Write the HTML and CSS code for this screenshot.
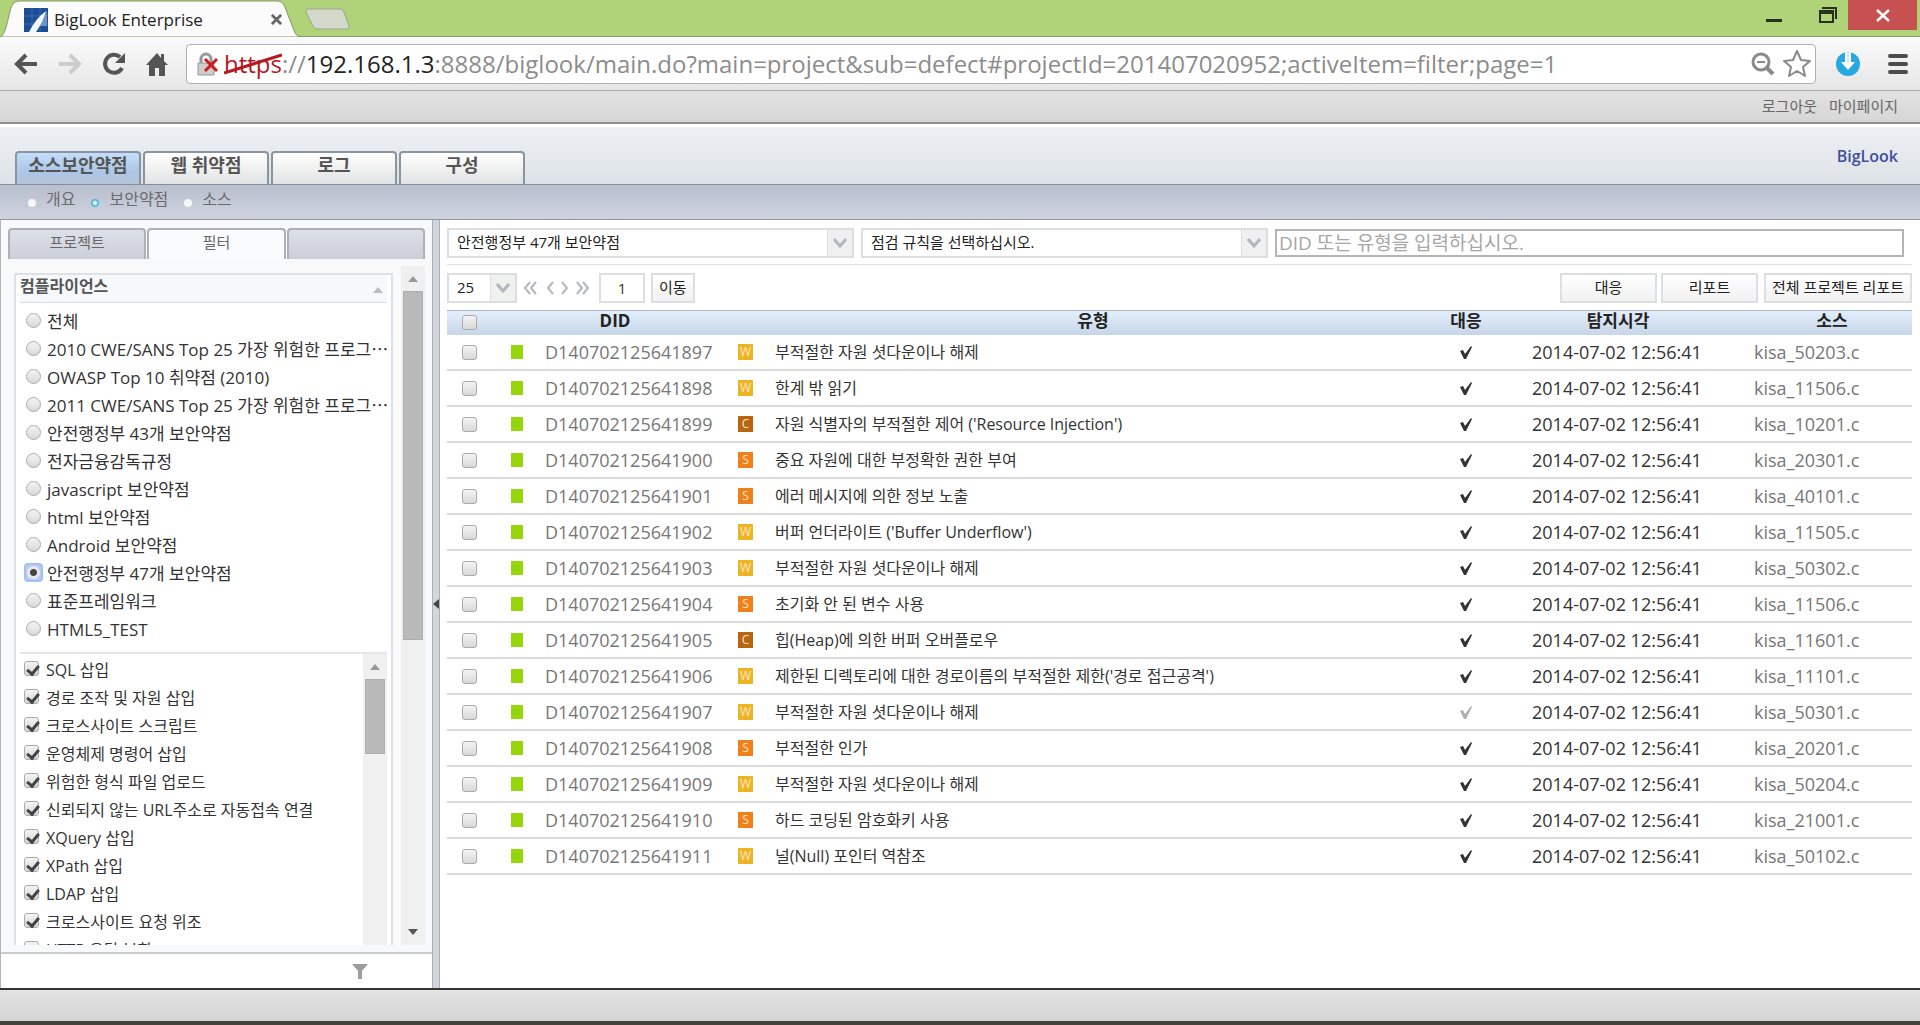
FILE: index.html
```html
<!DOCTYPE html>
<html lang="ko">
<head>
<meta charset="utf-8">
<title>BigLook Enterprise</title>
<link rel="stylesheet" href="styles.css">
</head>
<body>
<svg class="defs" aria-hidden="true">
  <symbol id="tick" viewBox="0 0 14 15"><path d="M1 6l3-1 2 4 6-8 1 1-6 12H5z" fill="currentColor"/></symbol>
  <symbol id="down" viewBox="0 0 14 10"><path d="M1 1l6 7 6-7" fill="none" stroke="currentColor" stroke-width="3"/></symbol>
</svg>

<header class="browser">
  <div class="tabstrip">
    <div class="page-tab">
      <svg class="tab-shape" viewBox="0 0 312 37" preserveAspectRatio="none" aria-hidden="true"><path d="M0 37C8 34 8 10 14 3q2-2 6-2h264q6 0 8 5l10 25q2 6 8 6z" fill="#fbfbfb" stroke="#7f9560"/></svg>
      <svg class="favicon" viewBox="0 0 24 24" aria-hidden="true"><path d="M0 0h24v24H0z" fill="#1d4d95"/><path d="M0 8h24M0 16h24M8 0v24M16 0v24" stroke="#3a6bb0"/><path d="M23 3v15H8q10-4 15-15z" fill="#6f93c8"/><path d="M22 3Q12 10 5 24h7Q19 14 22 3z" fill="#f4f8fd"/></svg>
      <span class="page-title">BigLook Enterprise</span>
      <button class="icon-btn tab-close" aria-label="탭 닫기"><svg width="11" height="11" viewBox="0 0 12 12"><path d="M1 1l10 10M11 1L1 11" stroke="#666" stroke-width="3"/></svg></button>
    </div>
    <button class="icon-btn new-tab" aria-label="새 탭"><svg width="47" height="22" viewBox="0 0 47 22"><path d="M4 1h32q3 0 4 3l5 14q1 3-2 3H13q-3 0-4-3L2 4Q1 1 4 1z" fill="#d3dacb" stroke="#9aa885"/></svg></button>
    <div class="window-controls">
      <button class="icon-btn win" aria-label="최소화"><svg width="16" height="16" viewBox="0 0 16 16"><path d="M0 12h16v3H0z" fill="#26301a"/></svg></button>
      <button class="icon-btn win" aria-label="이전 크기로"><svg width="18" height="16" viewBox="0 0 18 16"><path d="M3 1h14v11" fill="none" stroke="#26301a" stroke-width="2"/><path d="M1 5h13v10H1z" fill="none" stroke="#26301a" stroke-width="2"/><path d="M0 3h15v4H0z" fill="#26301a"/></svg></button>
      <button class="icon-btn win win-close" aria-label="닫기"><svg width="14" height="13" viewBox="0 0 14 13"><path d="M1 1l12 11M13 1L1 12" stroke="#fff" stroke-width="2.4"/></svg></button>
    </div>
  </div>
  <div class="toolbar">
    <button class="icon-btn" aria-label="뒤로"><svg width="24" height="22" viewBox="0 0 24 22"><path d="M23 11H4M12 2l-9 9 9 9" fill="none" stroke="#555" stroke-width="4"/></svg></button>
    <button class="icon-btn" aria-label="앞으로"><svg width="24" height="22" viewBox="0 0 24 22"><path d="M1 11h19M12 2l9 9-9 9" fill="none" stroke="#ccc" stroke-width="4"/></svg></button>
    <button class="icon-btn" aria-label="새로고침"><svg width="24" height="24" viewBox="0 0 24 24"><path d="M20 16A9 9 0 1 1 18 5" fill="none" stroke="#555" stroke-width="4"/><path d="M23 1v10H13z" fill="#555"/></svg></button>
    <button class="icon-btn" aria-label="홈"><svg width="22" height="24" viewBox="0 0 22 24"><path d="M11 1L0 13h3v11h6v-8h4v8h6V13h3l-4-4V2h-3v4z" fill="#555"/></svg></button>
    <div class="omnibox">
      <svg class="lock" width="22" height="24" viewBox="0 0 22 24" aria-hidden="true"><path d="M4 12V7a5 5 0 0 1 10 0v5" fill="none" stroke="#999" stroke-width="3"/><path d="M1 11h16v12H1z" fill="#ccc" stroke="#999"/><path d="M8 7l12 12M20 7L8 19" stroke="#cf1a1a" stroke-width="3"/></svg>
      <div class="url"><span class="scheme">https<svg class="strike" viewBox="0 0 56 22" preserveAspectRatio="none" aria-hidden="true"><path d="M0 20L56 2" stroke="#b5191e" stroke-width="3"/></svg></span>://<span class="host">192.168.1.3</span>:8888/biglook/main.do?main=project&amp;sub=defect#projectId=201407020952;activeItem=filter;page=1</div>
      <button class="icon-btn" aria-label="확대/축소"><svg width="24" height="24" viewBox="0 0 24 24"><circle cx="10" cy="10" r="8" fill="none" stroke="#8a8a8a" stroke-width="3"/><path d="M16 16l6 6" stroke="#8a8a8a" stroke-width="4"/><path d="M6 10h8" stroke="#8a8a8a" stroke-width="2"/></svg></button>
      <button class="icon-btn" aria-label="북마크"><svg width="28" height="27" viewBox="0 0 28 27"><path d="M14 1l4 9 9 1-7 6 2 9-8-5-8 5 2-9-7-6 9-1z" fill="#fff" stroke="#8a8a8a" stroke-width="2" stroke-linejoin="round"/></svg></button>
    </div>
    <button class="icon-btn" aria-label="다운로드"><svg width="24" height="24" viewBox="0 0 24 24"><circle cx="12" cy="12" r="12" fill="#27a9e0"/><path d="M9 0h6v10h4l-7 8-7-8h4z" fill="#fff"/><path d="M11 0h2v11h-2z" fill="#27a9e0" opacity=".25"/></svg></button>
    <button class="icon-btn menu" aria-label="메뉴"><svg width="20" height="20" viewBox="0 0 20 20"><path d="M2 2h16M2 10h16M2 18h16" stroke="#4c4c4c" stroke-width="4" stroke-linecap="round"/></svg></button>
  </div>
</header>

<nav class="userbar"><a href="#">로그아웃</a><a href="#">마이페이지</a></nav>

<div class="masthead">
  <nav class="main-tabs">
    <a class="main-tab active" href="#">소스보안약점</a>
    <a class="main-tab" href="#">웹 취약점</a>
    <a class="main-tab" href="#">로그</a>
    <a class="main-tab" href="#">구성</a>
  </nav>
  <span class="brand">BigLook</span>
</div>
<nav class="subnav">
  <a href="#">개요</a><a class="current" href="#">보안약점</a><a href="#">소스</a>
</nav>

<div class="workspace">
  <aside class="sidebar">
    <nav class="side-tabs">
      <a class="side-tab" href="#">프로젝트</a>
      <a class="side-tab active" href="#">필터</a>
      <span class="side-tab"></span>
    </nav>
    <div class="side-body">
      <section class="filter-panel">
        <h2 class="panel-title">컴플라이언스<i class="tri up pale"></i></h2>
        <div class="options radios">
          <label><input type="radio" name="c"><span>전체</span></label>
          <label><input type="radio" name="c"><span>2010 CWE/SANS Top 25 가장 위험한 프로그⋯</span></label>
          <label><input type="radio" name="c"><span>OWASP Top 10 취약점 (2010)</span></label>
          <label><input type="radio" name="c"><span>2011 CWE/SANS Top 25 가장 위험한 프로그⋯</span></label>
          <label><input type="radio" name="c"><span>안전행정부 43개 보안약점</span></label>
          <label><input type="radio" name="c"><span>전자금융감독규정</span></label>
          <label><input type="radio" name="c"><span>javascript 보안약점</span></label>
          <label><input type="radio" name="c"><span>html 보안약점</span></label>
          <label><input type="radio" name="c"><span>Android 보안약점</span></label>
          <label><input type="radio" name="c" checked><span>안전행정부 47개 보안약점</span></label>
          <label><input type="radio" name="c"><span>표준프레임워크</span></label>
          <label><input type="radio" name="c"><span>HTML5_TEST</span></label>
        </div>
        <div class="rules">
          <div class="options checks">
            <label><input type="checkbox" checked><span>SQL 삽입</span></label>
            <label><input type="checkbox" checked><span>경로 조작 및 자원 삽입</span></label>
            <label><input type="checkbox" checked><span>크로스사이트 스크립트</span></label>
            <label><input type="checkbox" checked><span>운영체제 명령어 삽입</span></label>
            <label><input type="checkbox" checked><span>위험한 형식 파일 업로드</span></label>
            <label><input type="checkbox" checked><span>신뢰되지 않는 URL주소로 자동접속 연결</span></label>
            <label><input type="checkbox" checked><span>XQuery 삽입</span></label>
            <label><input type="checkbox" checked><span>XPath 삽입</span></label>
            <label><input type="checkbox" checked><span>LDAP 삽입</span></label>
            <label><input type="checkbox" checked><span>크로스사이트 요청 위조</span></label>
            <label><input type="checkbox" checked><span>HTTP 응답 분할</span></label>
          </div>
          <div class="scrollbar"><i class="tri up"></i><div class="thumb thumb-small"></div></div>
        </div>
      </section>
      <div class="scrollbar outer"><i class="tri up"></i><div class="thumb"></div><i class="tri down"></i></div>
    </div>
    <div class="side-foot"><button class="icon-btn" aria-label="필터 적용"><svg width="16" height="15" viewBox="0 0 16 15"><path d="M0 0h16l-6 7v8H6V7z" fill="#9d9d9d"/></svg></button></div>
  </aside>
  <div class="splitter"><i></i></div>

  <main class="content">
    <div class="filters">
      <div class="combo wide"><select aria-label="컴플라이언스"><option>안전행정부 47개 보안약점</option></select><span class="arrow"><svg width="14" height="10"><use href="#down"/></svg></span></div>
      <div class="combo wide"><select aria-label="점검 규칙"><option>점검 규칙을 선택하십시오.</option></select><span class="arrow"><svg width="14" height="10"><use href="#down"/></svg></span></div>
      <input class="search" type="text" placeholder="DID 또는 유형을 입력하십시오." aria-label="검색">
    </div>
    <div class="actions">
      <div class="combo small"><select aria-label="페이지당 개수"><option>25</option></select><span class="arrow"><svg width="14" height="10"><use href="#down"/></svg></span></div>
      <div class="pager">
        <button class="icon-btn" aria-label="처음"><svg width="14" height="14" viewBox="0 0 14 14"><path d="M7 1L2 7l5 6M13 1L8 7l5 6"/></svg></button>
        <button class="icon-btn" aria-label="이전"><svg width="8" height="14" viewBox="0 0 8 14"><path d="M7 1L2 7l5 6"/></svg></button>
        <button class="icon-btn" aria-label="다음"><svg width="8" height="14" viewBox="0 0 8 14"><path d="M1 1l5 6-5 6"/></svg></button>
        <button class="icon-btn" aria-label="마지막"><svg width="14" height="14" viewBox="0 0 14 14"><path d="M1 1l5 6-5 6M7 1l5 6-5 6"/></svg></button>
      </div>
      <input class="page-no" type="text" value="1" aria-label="페이지">
      <button class="btn">이동</button>
      <span class="spacer"></span>
      <button class="btn fixed">대응</button>
      <button class="btn fixed">리포트</button>
      <button class="btn">전체 프로젝트 리포트</button>
    </div>
    <table class="defects">
      <colgroup><col class="c-box"><col class="c-state"><col class="c-did"><col class="c-badge"><col><col class="c-act"><col class="c-time"><col class="c-src"></colgroup>
      <thead><tr><th><input type="checkbox" aria-label="전체 선택"></th><th colspan="2">DID</th><th colspan="2">유형</th><th>대응</th><th>탐지시각</th><th>소스</th></tr></thead>
      <tbody>
        <tr><td><input type="checkbox" aria-label="선택"></td><td><i class="state"></i></td><td>D140702125641897</td><td><b class="badge w">W</b></td><td>부적절한 자원 셧다운이나 해제</td><td><svg class="tick"><use href="#tick"/></svg></td><td>2014-07-02 12:56:41</td><td>kisa_50203.c</td></tr>
        <tr><td><input type="checkbox" aria-label="선택"></td><td><i class="state"></i></td><td>D140702125641898</td><td><b class="badge w">W</b></td><td>한계 밖 읽기</td><td><svg class="tick"><use href="#tick"/></svg></td><td>2014-07-02 12:56:41</td><td>kisa_11506.c</td></tr>
        <tr><td><input type="checkbox" aria-label="선택"></td><td><i class="state"></i></td><td>D140702125641899</td><td><b class="badge c">C</b></td><td>자원 식별자의 부적절한 제어 ('Resource Injection')</td><td><svg class="tick"><use href="#tick"/></svg></td><td>2014-07-02 12:56:41</td><td>kisa_10201.c</td></tr>
        <tr><td><input type="checkbox" aria-label="선택"></td><td><i class="state"></i></td><td>D140702125641900</td><td><b class="badge s">S</b></td><td>중요 자원에 대한 부정확한 권한 부여</td><td><svg class="tick"><use href="#tick"/></svg></td><td>2014-07-02 12:56:41</td><td>kisa_20301.c</td></tr>
        <tr><td><input type="checkbox" aria-label="선택"></td><td><i class="state"></i></td><td>D140702125641901</td><td><b class="badge s">S</b></td><td>에러 메시지에 의한 정보 노출</td><td><svg class="tick"><use href="#tick"/></svg></td><td>2014-07-02 12:56:41</td><td>kisa_40101.c</td></tr>
        <tr><td><input type="checkbox" aria-label="선택"></td><td><i class="state"></i></td><td>D140702125641902</td><td><b class="badge w">W</b></td><td>버퍼 언더라이트 ('Buffer Underflow')</td><td><svg class="tick"><use href="#tick"/></svg></td><td>2014-07-02 12:56:41</td><td>kisa_11505.c</td></tr>
        <tr><td><input type="checkbox" aria-label="선택"></td><td><i class="state"></i></td><td>D140702125641903</td><td><b class="badge w">W</b></td><td>부적절한 자원 셧다운이나 해제</td><td><svg class="tick"><use href="#tick"/></svg></td><td>2014-07-02 12:56:41</td><td>kisa_50302.c</td></tr>
        <tr><td><input type="checkbox" aria-label="선택"></td><td><i class="state"></i></td><td>D140702125641904</td><td><b class="badge s">S</b></td><td>초기화 안 된 변수 사용</td><td><svg class="tick"><use href="#tick"/></svg></td><td>2014-07-02 12:56:41</td><td>kisa_11506.c</td></tr>
        <tr><td><input type="checkbox" aria-label="선택"></td><td><i class="state"></i></td><td>D140702125641905</td><td><b class="badge c">C</b></td><td>힙(Heap)에 의한 버퍼 오버플로우</td><td><svg class="tick"><use href="#tick"/></svg></td><td>2014-07-02 12:56:41</td><td>kisa_11601.c</td></tr>
        <tr><td><input type="checkbox" aria-label="선택"></td><td><i class="state"></i></td><td>D140702125641906</td><td><b class="badge w">W</b></td><td>제한된 디렉토리에 대한 경로이름의 부적절한 제한('경로 접근공격')</td><td><svg class="tick"><use href="#tick"/></svg></td><td>2014-07-02 12:56:41</td><td>kisa_11101.c</td></tr>
        <tr><td><input type="checkbox" aria-label="선택"></td><td><i class="state"></i></td><td>D140702125641907</td><td><b class="badge w">W</b></td><td>부적절한 자원 셧다운이나 해제</td><td><svg class="tick off"><use href="#tick"/></svg></td><td>2014-07-02 12:56:41</td><td>kisa_50301.c</td></tr>
        <tr><td><input type="checkbox" aria-label="선택"></td><td><i class="state"></i></td><td>D140702125641908</td><td><b class="badge s">S</b></td><td>부적절한 인가</td><td><svg class="tick"><use href="#tick"/></svg></td><td>2014-07-02 12:56:41</td><td>kisa_20201.c</td></tr>
        <tr><td><input type="checkbox" aria-label="선택"></td><td><i class="state"></i></td><td>D140702125641909</td><td><b class="badge w">W</b></td><td>부적절한 자원 셧다운이나 해제</td><td><svg class="tick"><use href="#tick"/></svg></td><td>2014-07-02 12:56:41</td><td>kisa_50204.c</td></tr>
        <tr><td><input type="checkbox" aria-label="선택"></td><td><i class="state"></i></td><td>D140702125641910</td><td><b class="badge s">S</b></td><td>하드 코딩된 암호화키 사용</td><td><svg class="tick"><use href="#tick"/></svg></td><td>2014-07-02 12:56:41</td><td>kisa_21001.c</td></tr>
        <tr><td><input type="checkbox" aria-label="선택"></td><td><i class="state"></i></td><td>D140702125641911</td><td><b class="badge w">W</b></td><td>널(Null) 포인터 역참조</td><td><svg class="tick"><use href="#tick"/></svg></td><td>2014-07-02 12:56:41</td><td>kisa_50102.c</td></tr>
      </tbody>
    </table>
  </main>
</div>
<footer class="statusbar"></footer>
</body>
</html>
```
FILE: styles.css
```css
* { box-sizing: border-box; }

body {
  margin: 0;
  height: 100vh;
  display: flex;
  flex-direction: column;
  overflow: hidden;
  background: #fff;
  color: #333;
  font: 16px/24px "Open Sans", "Noto Sans CJK KR", sans-serif;
}

a { color: inherit; text-decoration: none; }
button, input, select { font: inherit; color: inherit; margin: 0; }
svg { display: block; flex: none; }
.defs { position: absolute; width: 0; height: 0; }

.icon-btn {
  display: flex;
  align-items: center;
  justify-content: center;
  padding: 0;
  border: 0;
  background: none;
}

/* Browser window */
.tabstrip {
  display: flex;
  height: 37px;
  background: #b0d37a;
  border-bottom: 1px solid #8a9c70;
}
.page-tab {
  position: relative;
  display: flex;
  align-items: center;
  width: 304px;
  height: 37px;
  padding: 2px 22px 0 24px;
}
.tab-shape { position: absolute; inset: 0; width: 100%; height: 100%; }
.favicon, .page-title, .tab-close { position: relative; }
.favicon { width: 24px; height: 24px; }
.page-title { flex: 1; padding-left: 6px; font-size: 17px; color: #222; white-space: nowrap; }
.new-tab { padding-top: 2px; }
.window-controls { display: flex; margin-left: auto; margin-right: 3px; height: 30px; }
.win { width: 34px; padding-right: 18px; justify-content: flex-end; }
.win:nth-child(2) { width: 48px; padding-right: 11px; }
.win-close { width: 69px; padding: 0; justify-content: center; background: #c75050; }

.toolbar {
  display: flex;
  align-items: center;
  gap: 20px;
  height: 54px;
  padding: 0 12px 0 14px;
  background: linear-gradient(#fbfbfb, #e6e6e6);
  border-bottom: 1px solid #aaa;
}
.toolbar > .menu { margin-left: 8px; }
.omnibox {
  display: flex;
  align-items: center;
  gap: 8px;
  flex: 1;
  min-width: 0;
  height: 40px;
  padding: 0 4px 0 10px;
  background: #fff;
  border: 1px solid #b0b0b4;
  border-radius: 4px;
}
.toolbar > .icon-btn:nth-child(4) { margin-right: -2px; }
.lock { margin-right: -3px; }
.url { flex: 1; min-width: 0; overflow: hidden; white-space: nowrap; font-size: 24px; line-height: 36px; color: #8c8c8c; }
.scheme { position: relative; color: #b5191e; }
.strike { position: absolute; left: 0; top: 6px; width: 100%; height: 22px; }
.host { color: #222; }

/* Application header */
.userbar {
  display: flex;
  justify-content: flex-end;
  align-items: center;
  gap: 12px;
  height: 33px;
  padding: 0 22px 2px 0;
  background: linear-gradient(#e2e2e2, #d6d6d6);
  border-bottom: 2px solid #8f8f8f;
  font-size: 15px;
  color: #666;
}
.masthead {
  display: flex;
  justify-content: space-between;
  align-items: flex-end;
  height: 60px;
  padding: 0 22px 0 15px;
  background: linear-gradient(#edf1f5, #dde2e6);
  border-top: 3px solid #fff;
}
.main-tabs { display: flex; gap: 2px; }
.main-tab {
  width: 126px;
  height: 33px;
  border: 2px solid #8b93a0;
  border-bottom: 0;
  border-radius: 4px 4px 0 0;
  background: linear-gradient(#fff, #e1e2e3);
  font-size: 18px;
  font-weight: 600;
  line-height: 24px;
  text-align: center;
  color: #555;
}
.main-tab.active { background: linear-gradient(#c4ddfb, #adc6e6 60%, #b5c4da); }
.brand { align-self: center; font-weight: 600; color: #414e9b; font-size: 16px; }
.subnav {
  display: flex;
  align-items: flex-start;
  gap: 16px;
  height: 36px;
  padding: 2px 28px;
  background: linear-gradient(#b8bfcd, #ced3de);
  border-top: 1px solid #868e9a;
  border-bottom: 1px solid #8f96a2;
  color: #6b6b6b;
}
.subnav a { display: flex; align-items: center; gap: 10px; }
.subnav a::before { content: ""; width: 8px; height: 8px; margin-top: 8px; border-radius: 50%; background: #f4f6fa; }
.subnav .current::before { background: radial-gradient(#fff 10%, #4fb3dc 60%); }

/* Sidebar */
.workspace { display: flex; flex: 1; min-height: 0; }
.sidebar {
  display: flex;
  flex-direction: column;
  width: 432px;
  flex: none;
  background: #f8f9fb;
  border-left: 1px solid #b5b5b5;
}
.side-tabs { display: flex; gap: 1px; padding: 8px 7px 0; }
.side-tab {
  flex: 1;
  height: 31px;
  border: 2px solid #aeb0b6;
  border-bottom: 0;
  border-radius: 4px 4px 0 0;
  background: linear-gradient(#dde0e8, #cbcfda);
  font-size: 15px;
  text-align: center;
  color: #666;
}
.side-tab.active { background: #fafbfd; }
.side-body {
  display: flex;
  flex: 1;
  min-height: 0;
  gap: 8px;
  padding: 7px 7px 0 13px;
  overflow: hidden;
  margin-bottom: 7px;
}
.filter-panel {
  flex: 1;
  min-width: 0;
  display: flex;
  flex-direction: column;
  margin-top: 7px;
  padding: 0 4px;
  border: 2px solid #dde1e6;
  border-bottom: 0;
  background: #fff;
}
.panel-title {
  display: flex;
  flex: none;
  justify-content: space-between;
  align-items: center;
  height: 28px;
  margin: 0 0 3px;
  padding: 0 4px 6px 0;
  background: #f6f9fc;
  border-bottom: 1px solid #d9dee4;
  font-size: 16px;
  font-weight: 700;
  color: #555;
}
.options { flex: 1; min-width: 0; }
.options label { display: flex; align-items: center; gap: 7px; height: 28px; white-space: nowrap; }
.options span { line-height: 24px; padding-top: 4px; }
.radios { flex: none; padding: 0 0 10px 6px; border-bottom: 2px solid #e4e6e8; font-size: 17px; }
.radios label { gap: 6px; }
.checks { padding-left: 4px; overflow: hidden; }
.rules { display: flex; flex: 1; min-height: 0; overflow: hidden; }
.options input, .defects input {
  appearance: none;
  flex: none;
  width: 15px;
  height: 15px;
  border: 1px solid #aaa;
  border-radius: 3px;
  background: linear-gradient(#f4f4f4, #d8d8d8);
}
.options input[type=radio] { border-radius: 50%; }
.options input[type=radio]:checked {
  width: 19px;
  height: 19px;
  margin: 0 -2px;
  border: 2px solid #a5bfee;
  border-radius: 4px;
  background: radial-gradient(circle, #444 0 3px, #e8e8e8 4px 6px, #b9cdf3 7px);
}
.options input[type=checkbox]:checked::after {
  content: "";
  display: block;
  width: 5px;
  height: 9px;
  margin: 1px 0 0 4px;
  border: solid #444;
  border-width: 0 3px 3px 0;
  transform: rotate(40deg);
}

.scrollbar { display: flex; flex-direction: column; align-items: center; flex: none; width: 24px; padding-top: 10px; background: #f0f0f0; }
.thumb { width: 20px; height: 53%; margin-top: 9px; background: #b9b9b9; border: 1px solid #adadad; }
.thumb-small { height: 75px; }
.outer { padding-bottom: 10px; }
.outer .down { margin-top: auto; }
.tri { width: 0; height: 0; border: solid transparent; border-width: 0 5px; }
.tri.up { border-bottom: 6px solid #999; }
.tri.up.pale { border-bottom-color: #bbb; margin-top: 8px; }
.tri.down { border-top: 6px solid #555; }
.side-foot {
  display: flex;
  justify-content: flex-end;
  align-items: center;
  height: 36px;
  padding-right: 64px;
  border-top: 2px solid #ccc;
  background: #fff;
}
.splitter {
  display: flex;
  align-items: center;
  flex: none;
  width: 8px;
  background: #d0d5de;
  border: solid #aab0ba;
  border-width: 0 1px;
}
.splitter i { border: solid transparent; border-width: 5px 6px 5px 0; border-right-color: #444; }

/* Defect list */
.content { flex: 1; min-width: 0; padding: 8px 8px 0 7px; }
.filters {
  display: flex;
  gap: 7px;
  padding: 0 8px 6px 0;
  border-bottom: 1px solid #dfe1e5;
  font-size: 15px;
}
.combo { display: grid; border: 2px solid #dcdee2; background: #fff; color: #222; }
.combo select, .combo .arrow { grid-area: 1 / 1; }
.combo select { appearance: none; border: 0; background: none; padding: 0 30px 2px 8px; height: 26px; }
.wide { flex: 0 1 407px; }
.small { width: 70px; }
.arrow {
  justify-self: end;
  display: flex;
  align-items: center;
  justify-content: center;
  width: 25px;
  background: #f0f0f1;
  border-left: 1px solid #dcdee2;
  color: #b3b7bd;
  pointer-events: none;
}
.search { flex: 1; min-width: 0; height: 28px; margin-top: 1px; padding: 0 2px; border: 2px solid #b4b4b4; font-size: 19px; }
.search::placeholder { color: #a6a6a6; opacity: 1; }
.actions { display: flex; align-items: center; gap: 6px; padding: 8px 0 7px; font-size: 15px; }
.pager { display: flex; gap: 7px; padding-right: 3px; }
.pager svg { fill: none; stroke: #b3b7be; stroke-width: 2; }
.pager .icon-btn:nth-child(2) { margin-left: 2px; }
.page-no { width: 46px; height: 30px; padding: 0; border: 2px solid #dcdee2; text-align: center; }
.btn { height: 30px; padding: 0 6px 2px; border: 2px solid #dcdee2; background: linear-gradient(#fff, #f1f1f2); color: #222; }
.fixed { width: 97px; }
.fixed + .fixed { margin-left: -2px; }
.spacer { flex: 1; }

.defects { width: 100%; table-layout: fixed; border-collapse: separate; border-spacing: 0; }
.c-box { width: 45px; }
.c-state { width: 50px; }
.c-did { width: 196px; }
.c-badge { width: 34px; }
.c-act { width: 36px; }
.c-time { width: 268px; }
.c-src { width: 160px; }
.defects th {
  height: 25px;
  padding: 0 0 4px;
  border-top: 1px solid #a9b8ca;
  background: linear-gradient(#e4effc, #c6d5e8);
  font-size: 17px;
  font-weight: 700;
  line-height: 20px;
  color: #222;
}
.defects th input { margin-top: 2px; }
.defects td { height: 36px; padding: 0; border-bottom: 2px solid #dcdcdf; white-space: nowrap; overflow: hidden; }
.defects input { display: block; margin: 0 auto; }
.defects td:nth-child(3), .defects td:nth-child(8) { font-size: 18px; color: #777; }
.defects td:nth-child(3) { padding-left: 3px; }
.defects td:nth-child(5) { padding-left: 3px; }
.defects td:nth-child(7) { font-size: 18px; padding-left: 48px; }
.defects td:nth-child(8) { padding-left: 2px; }
.state { display: block; width: 12px; height: 14px; margin: 0 auto; background: #97d60c; }
.badge { display: block; width: 15px; height: 16px; font-size: 12px; font-weight: 400; line-height: 16px; text-align: center; color: #fbe6c8; }
.w { background: #edb521; }
.s { background: #f08019; }
.c { background: #b9640f; }
.tick { width: 14px; height: 15px; margin: 0 auto; color: #333; }
.tick.off { color: #b0b0b0; }

.statusbar {
  height: 37px;
  flex: none;
  background: linear-gradient(#e2e2e2, #d5d5d5);
  border-top: 2px solid #333;
  border-bottom: 4px solid #45443c;
}
```
